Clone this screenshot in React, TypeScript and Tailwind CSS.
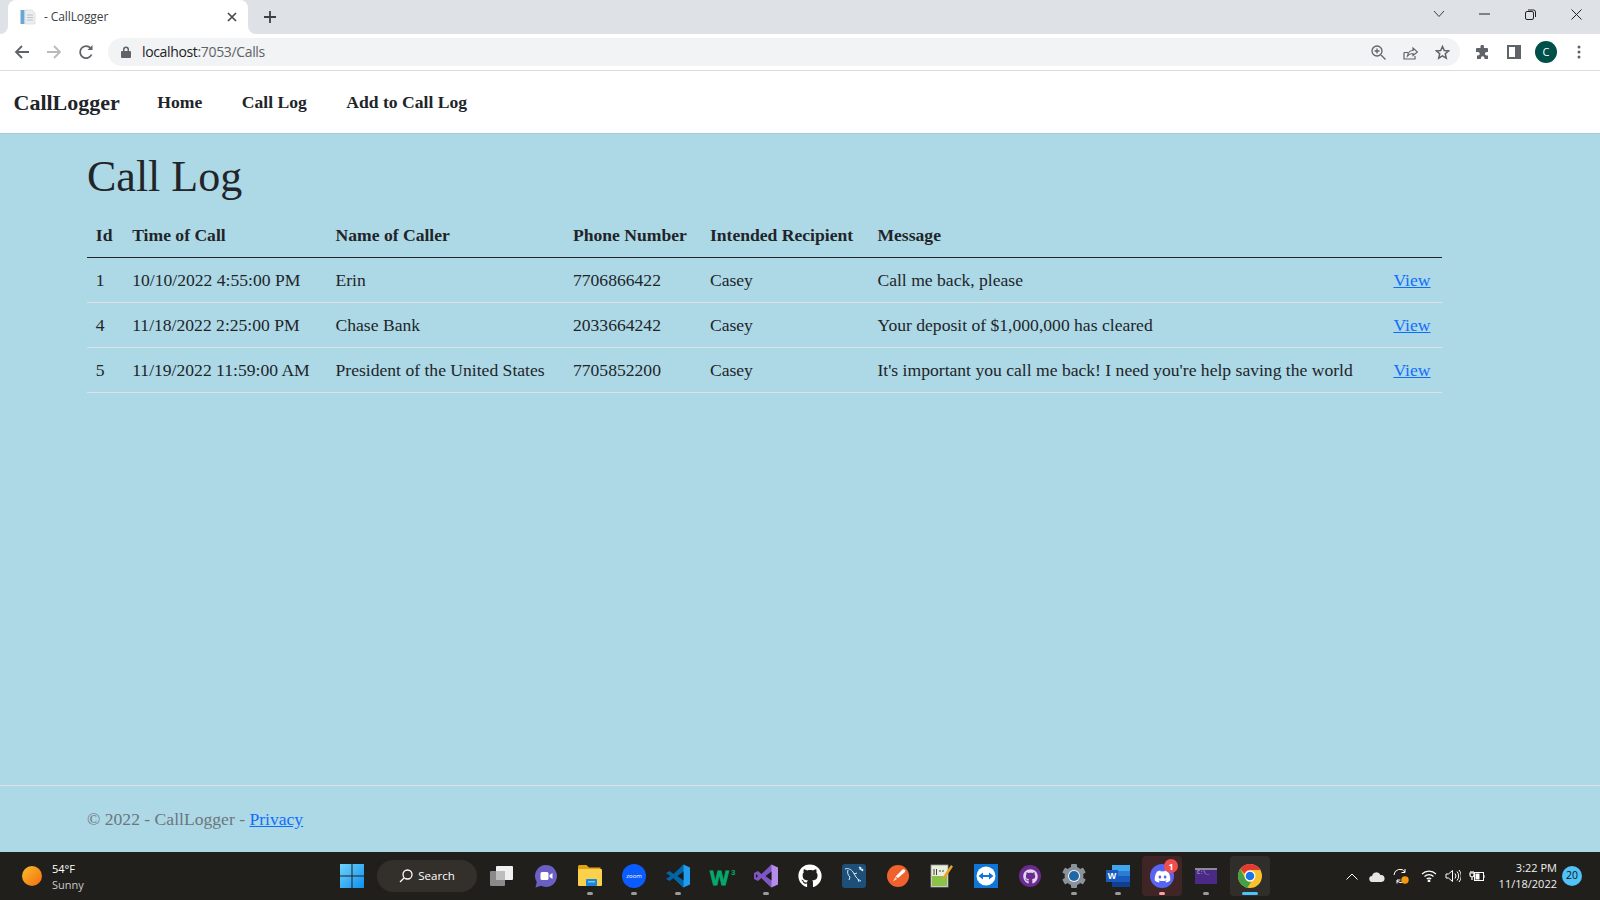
import React from "react";
import { FaGithub, FaDiscord } from "react-icons/fa";

const serif = "[font-family:'Liberation_Serif',serif]";

const rows = [
  ["1", "10/10/2022 4:55:00 PM", "Erin", "7706866422", "Casey", "Call me back, please"],
  ["4", "11/18/2022 2:25:00 PM", "Chase Bank", "2033664242", "Casey", "Your deposit of $1,000,000 has cleared"],
  ["5", "11/19/2022 11:59:00 AM", "President of the United States", "7705852200", "Casey", "It's important you call me back! I need you're help saving the world"],
];

function Favicon() {
  return (
    <svg width="16" height="16" viewBox="0 0 16 16">
      <rect x="0.5" y="1" width="4" height="14" fill="#6aa6d6" />
      <path d="M5 1h7l3 3v11H5z" fill="#eceff1" stroke="#cfd4d8" strokeWidth="0.6" />
      <path d="M7 6h6M7 8.5h6M7 11h6" stroke="#b9c2c9" strokeWidth="1" />
    </svg>
  );
}

function TabStrip() {
  return (
    <div className="h-[34px] bg-[#dee1e6] flex items-end relative shrink-0">
      <div className="ml-[8px] w-[240px] h-[34px] bg-white rounded-t-[8px] flex items-center pl-[12px] relative">
        <Favicon />
        <span className="ml-[8px] text-[12px] tracking-[-0.1px] text-[#3c4043] [font-family:'Open_Sans',sans-serif] flex-1">- CallLogger</span>
        <svg className="mr-[11px]" width="10" height="10" viewBox="0 0 10 10" stroke="#45484c" strokeWidth="1.7"><path d="M1 1l8 8M9 1l-8 8" /></svg>
        <div className="absolute left-[-8px] bottom-0 w-[8px] h-[8px] bg-white"><div className="w-full h-full bg-[#dee1e6] rounded-br-[8px]" /></div>
        <div className="absolute right-[-8px] bottom-0 w-[8px] h-[8px] bg-white"><div className="w-full h-full bg-[#dee1e6] rounded-bl-[8px]" /></div>
      </div>
      <svg className="ml-[15px] mb-[10px]" width="14" height="14" viewBox="0 0 14 14" stroke="#3c4043" strokeWidth="1.8"><path d="M7 1v12M1 7h12" /></svg>
      <div className="ml-auto self-start flex items-center h-[28px] pr-[18px]">
        <svg width="12" height="8" viewBox="0 0 12 8" fill="none" stroke="#3c4043" strokeWidth="1"><path d="M1 1l5 5.5L11 1" /></svg>
        <svg className="ml-[34px]" width="11" height="2" viewBox="0 0 11 2"><path d="M0 1h11" stroke="#222" strokeWidth="1" /></svg>
        <svg className="ml-[35px]" width="11" height="11" viewBox="0 0 11 11" fill="none" stroke="#222" strokeWidth="1"><rect x="0.5" y="2.5" width="8" height="8" rx="1.5" /><path d="M3 1h5.5A2 2 0 0 1 10.500 3v5" /></svg>
        <svg className="ml-[35px]" width="11" height="11" viewBox="0 0 11 11" stroke="#222" strokeWidth="1"><path d="M0.500 0.500l10 10M10.500 0.500l-10 10" /></svg>
      </div>
    </div>
  );
}

function Toolbar() {
  return (
    <div className="h-[37px] bg-white border-b border-[#dadce0] flex items-center shrink-0">
      <div className="w-[108px] flex items-center pl-[14px] gap-[16px]">
        <svg width="16" height="16" viewBox="0 0 16 16" fill="none" stroke="#5f6368" strokeWidth="1.800"><path d="M15 8H2M8 2L2 8l6 6" /></svg>
        <svg width="16" height="16" viewBox="0 0 16 16" fill="none" stroke="#b8babd" strokeWidth="1.800"><path d="M1 8h13M8 2l6 6-6 6" /></svg>
        <svg width="16" height="16" viewBox="0 0 16 16" fill="none" stroke="#5f6368" strokeWidth="1.800"><path d="M13.600 10.500A6 6 0 1 1 12.500 4" /><path d="M14.500 1v5h-5z" fill="#5f6368" stroke="none" /></svg>
      </div>
      <div className="w-[1352px] h-[28px] bg-[#f1f3f4] rounded-full flex items-center pl-[13px] pr-[10px]">
        <svg width="10" height="12" viewBox="0 0 10 12" fill="#5f6368"><path d="M2 5V3.500a3 3 0 0 1 6 0V5h1a1 1 0 0 1 1 1v5a1 1 0 0 1-1 1H1a1 1 0 0 1-1-1V6a1 1 0 0 1 1-1zm1.500 0h3V3.500a1.500 1.500 0 0 0-3 0z" /></svg>
        <span className="ml-[11px] pb-[2px] text-[14px] text-[#202124] [font-family:'Open_Sans',sans-serif] tracking-[-0.35px]">localhost<span className="text-[#5f6368]">:7053/Calls</span></span>
        <div className="ml-auto flex items-center gap-[17px]">
          <svg width="15" height="15" viewBox="0 0 15 15" fill="none" stroke="#5f6368" strokeWidth="1.300"><circle cx="6" cy="6" r="5" /><path d="M10 10l4.500 4.500M6 3.500v5M3.500 6h5" /></svg>
          <svg width="15" height="15" viewBox="0 0 15 15" fill="none" stroke="#5f6368" strokeWidth="1.200"><path d="M1 7.500V14h11v-3M1 7.500h4M4.500 11C5 7 8 5.500 10 5.500V3l4.500 4L10 10.500V8.500C8 8.500 6 9 4.500 11z" /></svg>
          <svg width="15" height="15" viewBox="0 0 15 15" fill="none" stroke="#5f6368" strokeWidth="1.500"><path d="M7.500 1.500l1.800 4 4.300.4-3.300 2.900 1 4.300-3.800-2.300-3.800 2.300 1-4.300L1.400 5.900l4.300-.4z" /></svg>
        </div>
      </div>
      <div className="flex items-center pl-[15px]">
        <svg width="15" height="15" viewBox="0 0 15 15" fill="#5f6368"><path d="M5.500 1.500a1.700 1.700 0 0 1 3.400 0V3H12a1 1 0 0 1 1 1v3h-1.300a1.800 1.800 0 0 0 0 3.600H13V14H9.500v-1a1.800 1.800 0 0 0-3.600 0v1H2v-3.500h1a1.800 1.800 0 0 0 0-3.600H1V4a1 1 0 0 1 1-1h3.500z" /></svg>
        <svg className="ml-[17px]" width="14" height="14" viewBox="0 0 14 14" fill="none"><rect x="1" y="1" width="12" height="12" stroke="#5f6368" strokeWidth="2" /><rect x="8" y="1" width="5" height="12" fill="#5f6368" /></svg>
        <div className="ml-[14px] w-[22px] h-[22px] rounded-full bg-[#00504a] text-white text-[11px] flex items-center justify-center [font-family:'Open_Sans',sans-serif]">C</div>
        <svg className="ml-[20px]" width="4" height="14" viewBox="0 0 4 14" fill="#5f6368"><circle cx="2" cy="2" r="1.500" /><circle cx="2" cy="7" r="1.500" /><circle cx="2" cy="12" r="1.500" /></svg>
      </div>
    </div>
  );
}

function NavBar() {
  return (
    <div className={`h-[63px] bg-white flex items-center pl-[13.500px] text-[#212529] font-bold ${serif} border-b border-[#a5cbd9] shrink-0`}>
      <span className="text-[22px]">CallLogger</span>
      <span className="ml-[37.500px] text-[17.600px]">Home</span>
      <span className="ml-[39.500px] text-[17.600px]">Call Log</span>
      <span className="ml-[39.500px] text-[17.600px]">Add to Call Log</span>
    </div>
  );
}

const ths = ["Id", "Time of Call", "Name of Caller", "Phone Number", "Intended Recipient", "Message"];
const pad = ["pl-[8.800px] pr-[9.500px]", "px-[8.800px]", "pl-[8.800px] pr-[10px]", "px-[8.800px]", "px-[8.800px]", "px-[8.800px]"];

function CallTable() {
  return (
    <table className="w-[1355px] border-collapse text-[17.600px] leading-[26.400px] text-[#212529]">
      <thead>
        <tr className="border-b border-[#212529] h-[45px] text-left">
          {ths.map((t, i) => (
            <th key={t} className={`${pad[i]} pt-[1px] font-bold`}>{t}</th>
          ))}
          <th className="pl-[8.800px] pr-[11.500px]"></th>
        </tr>
      </thead>
      <tbody>
        {rows.map((r) => (
          <tr key={r[0]} className="border-b border-[#dee2e6] h-[45px]">
            {r.map((c, i) => (
              <td key={i} className={`${pad[i]} pt-[1px]`}>{c}</td>
            ))}
            <td className="pl-[8.800px] pr-[11.500px] pt-[1px] text-right"><span className="text-[#0d6efd] underline">View</span></td>
          </tr>
        ))}
      </tbody>
    </table>
  );
}

function Dot({ color = "#9b9b9b", w = 6 }: { color?: string; w?: number }) {
  return <div className="absolute bottom-[1px] left-1/2 -translate-x-1/2 h-[3px] rounded-full" style={{ background: color, width: w }} />;
}

function Item({ children, dot, bg, dotW }: { children: React.ReactNode; dot?: string; bg?: string; dotW?: number }) {
  return (
    <div className="relative w-[44px] h-[40px] flex items-center justify-center shrink-0">
      {bg && <div className={`absolute inset-y-0 left-[2px] right-[2px] rounded-[4px] ${bg}`} />}
      <div className="relative">{children}</div>
      {dot && <Dot color={dot} w={dotW} />}
    </div>
  );
}

const I = {
  Win: () => (
    <svg width="24" height="24" viewBox="0 0 24 24">
      <defs>
        <linearGradient id="wg" x1="0" y1="0" x2="1" y2="1"><stop offset="0" stopColor="#6fd3fb" /><stop offset="1" stopColor="#0f8fee" /></linearGradient>
      </defs>
      <path d="M0 0h11.500v11.500H0zM12.500 0H24v11.500H12.500zM0 12.500h11.500V24H0zM12.500 12.500H24V24H12.500z" fill="url(#wg)" />
    </svg>
  ),
  Task: () => (
    <svg width="24" height="22" viewBox="0 0 24 22">
      <rect x="6" y="1" width="17" height="14" rx="1" fill="#f0f0f0" />
      <rect x="0" y="6" width="15" height="15" rx="1" fill="#8a8a8a" />
      <rect x="6" y="6" width="9" height="9" fill="#bdbdbd" />
    </svg>
  ),
  Teams: () => (
    <svg width="24" height="24" viewBox="0 0 24 24">
      <path d="M12 1a11 11 0 1 1-5 20.800L1.500 23.500 2.800 18A11 11 0 0 1 12 1z" fill="#6b5fc4" />
      <rect x="6.500" y="8" width="8" height="8" rx="1.500" fill="#fff" />
      <path d="M15.500 11l3-2v6l-3-2z" fill="#fff" />
    </svg>
  ),
  Folder: () => (
    <svg width="24" height="22" viewBox="0 0 24 22">
      <path d="M0 1.500A1.500 1.500 0 0 1 1.500 0h7L11 2.500h11.500V6H0z" fill="#e0a410" />
      <rect x="0" y="4" width="24" height="17" rx="1" fill="#fbd04c" />
      <rect x="8" y="14" width="11" height="7" rx="1" fill="#1a86d8" />
      <rect x="10" y="16" width="7" height="1.500" fill="#7cc4f0" />
    </svg>
  ),
  Zoom: () => (
    <div className="w-[24px] h-[24px] rounded-full bg-[#0b5cff] text-white text-[6px] flex items-center justify-center [font-family:'Open_Sans',sans-serif]">zoom</div>
  ),
  VSCode: () => (
    <svg width="24" height="24" viewBox="0 0 24 24">
      <path d="M17.500 0.500L24 3.500v17l-6.500 3L7 13.500l10.500-13z" fill="#1f9cf0" />
      <path d="M17.500 0.500v23L7.500 14l-4 3L0 15l4.500-3L0 9l3.500-2 4 3z" fill="#0065a9" />
      <path d="M17.500 7.500L11.500 12l6 4.500z" fill="#1c1a17" />
    </svg>
  ),
  W3: () => (
    <div className="relative w-[26px] h-[20px] [font-family:'Liberation_Sans',sans-serif] font-bold text-[#04aa6d] leading-none">
      <span className="absolute left-[1px] top-[2px] text-[20px] [-webkit-text-stroke:0.8px_#04aa6d]">W</span>
      <span className="absolute left-[22px] top-[3px] text-[8px]">3</span>
    </div>
  ),
  VS: () => (
    <svg width="24" height="24" viewBox="0 0 24 24">
      <path d="M17.500 0.500L24 3.500v17l-6.500 3L7 13.500z" fill="#b48cea" />
      <path d="M17.500 0.500v23L7.500 14l-3.500 3L0 15V9l4 -2 3.500 3z" fill="#7f55c4" />
      <path d="M17.500 7.500L11.500 12l6 4.500z" fill="#1c1a17" />
      <path d="M2 10v4l2-2z" fill="#1c1a17" />
    </svg>
  ),
  MySql: () => (
    <svg width="24" height="24" viewBox="0 0 24 24">
      <rect width="24" height="24" rx="3" fill="#1d4f78" />
      <path d="M3 5c3-1 6 0 8 3l3 5c1.500 2 3 3 5 4M6 6c-1 3 0 5 2 7M8 13l-1 3M12 10l3-1M16 15l1 3" fill="none" stroke="#dfe8ef" strokeWidth="1" />
      <path d="M17 3l4 4M19 3l-1 2 2 1 1-1" fill="none" stroke="#dfe8ef" strokeWidth="1.300" />
    </svg>
  ),
  Postman: () => (
    <svg width="22" height="22" viewBox="0 0 22 22">
      <circle cx="11" cy="11" r="11" fill="#f0622d" />
      <path d="M15.500 4.500a1.800 1.800 0 0 1 2.500 2.500L11 13l-2.500-1.500z" fill="#fff" />
      <path d="M8.500 12L6 16.500 10 14z" fill="#ffd9c7" />
    </svg>
  ),
  Note: () => (
    <svg width="24" height="24" viewBox="0 0 24 24">
      <rect x="1" y="1" width="17" height="22" fill="#e8efdb" stroke="#999" strokeWidth="0.800" />
      <rect x="2" y="12" width="15" height="10" fill="#8bc34a" />
      <path d="M4 5v6M6.500 5v6M9 7h2M12 7h2" stroke="#444" strokeWidth="1" />
      <path d="M21 1l2 1.500-8 12-2.500 1.500.3-3z" fill="#e5a52a" />
    </svg>
  ),
  TV: () => (
    <div className="w-[24px] h-[24px] bg-[#0e76d8] flex items-center justify-center">
      <svg width="20" height="20" viewBox="0 0 20 20">
        <circle cx="10" cy="10" r="9.500" fill="#fff" />
        <path d="M2.500 10L7 6.500V9h6V6.500l4.500 3.500-4.500 3.500V11H7v2.500z" fill="#0e76d8" />
      </svg>
    </div>
  ),
  GHD: () => (
    <div className="w-[22px] h-[22px] rounded-full bg-[#6a2c91] flex items-center justify-center">
      <FaGithub size={15} color="#e3d6ec" />
    </div>
  ),
  Gear: () => (
    <svg width="24" height="24" viewBox="0 0 24 24">
      <g fill="#8a929a">
        <circle cx="12" cy="12" r="9.500" />
        {[0, 60, 120, 180, 240, 300].map((a) => (
          <rect key={a} x="9" y="0" width="6" height="5" rx="1" transform={`rotate(${a} 12 12)`} />
        ))}
      </g>
      <circle cx="12" cy="12" r="6" fill="#f1f4f6" />
      <circle cx="12" cy="12" r="5" fill="#1f67a8" />
    </svg>
  ),
  Word: () => (
    <div className="relative w-[24px] h-[22px]">
      <div className="absolute right-0 top-0 w-[18px] h-[22px] flex flex-col">
        <div className="h-1/4 bg-[#41a5ee]" />
        <div className="h-1/4 bg-[#2b7cd3]" />
        <div className="h-1/4 bg-[#185abd]" />
        <div className="h-1/4 bg-[#103f91]" />
      </div>
      <div className="absolute left-0 top-[5px] w-[12px] h-[12px] bg-[#185abd] text-white text-[9px] font-bold flex items-center justify-center leading-none [font-family:'Liberation_Sans',sans-serif]">W</div>
    </div>
  ),
  Discord: () => (
    <div className="relative w-[24px] h-[24px] rounded-full bg-[#5865f2] flex items-center justify-center">
      <FaDiscord size={17} color="#fff" />
      <div className="absolute right-[-4px] top-[-5px] w-[14px] h-[14px] rounded-full bg-[#f04d4d] text-white text-[9px] font-bold flex items-center justify-center leading-none [font-family:'Open_Sans',sans-serif]">1</div>
    </div>
  ),
  Term: () => (
    <div className="w-[22px] h-[16px] bg-[#4b2a86] border-t-[2px] border-[#8a8a9a] text-[5px] leading-[6px] text-[#d5d5e5] pl-[2px] [font-family:'Liberation_Mono',monospace]">C:\_</div>
  ),
  Chrome: () => (
    <svg width="24" height="24" viewBox="0 0 24 24">
      <circle cx="12" cy="12" r="12" fill="#fbc02d" />
      <path d="M12 0a12 12 0 0 1 10.400 6H12a6 6 0 0 0-5.600 3.800L2.300 5A12 12 0 0 1 12 0z" fill="#e53935" />
      <path d="M2.300 5l4.700 8.800A6 6 0 0 0 13 18l-3.600 5.700A12 12 0 0 1 2.300 5z" fill="#43a047" />
      <circle cx="12" cy="12" r="5.500" fill="#fff" />
      <circle cx="12" cy="12" r="4.300" fill="#1a73e8" />
    </svg>
  ),
};

function Taskbar() {
  return (
    <div className="h-[48px] bg-[#211f1b] flex items-center text-white shrink-0 [font-family:'Open_Sans',sans-serif]">
      <div className="w-[330px] flex items-center pl-[22px] shrink-0">
        <div className="w-[20px] h-[20px] rounded-full bg-gradient-to-br from-[#f6bd2c] to-[#f46a0c]" />
        <div className="ml-[10px] pt-[1px] text-[11px] leading-[16px]">
          <div>54°F</div>
          <div className="text-[#c9c9c9]">Sunny</div>
        </div>
      </div>
      <Item><I.Win /></Item>
      <div className="w-[100px] h-[32px] ml-[3px] bg-[#33302b] rounded-full flex items-center justify-center text-[11.500px] shrink-0">
        <svg className="mr-[5px]" width="14" height="14" viewBox="0 0 14 14" fill="none" stroke="#fff" strokeWidth="1.300"><circle cx="8.500" cy="5.500" r="4.500" /><path d="M5 9l-4 4" /></svg>
        Search
      </div>
      <div className="w-[3px] shrink-0" />
      <Item><I.Task /></Item>
      <Item><I.Teams /></Item>
      <Item dot="#9b9b9b"><I.Folder /></Item>
      <Item dot="#9b9b9b"><I.Zoom /></Item>
      <Item dot="#9b9b9b"><I.VSCode /></Item>
      <Item><I.W3 /></Item>
      <Item dot="#9b9b9b"><I.VS /></Item>
      <Item><FaGithub size={24} color="#fff" /></Item>
      <Item><I.MySql /></Item>
      <Item><I.Postman /></Item>
      <Item><I.Note /></Item>
      <Item><I.TV /></Item>
      <Item><I.GHD /></Item>
      <Item dot="#9b9b9b"><I.Gear /></Item>
      <Item dot="#9b9b9b"><I.Word /></Item>
      <Item dot="#f7a0a8" bg="bg-[#402526]"><I.Discord /></Item>
      <Item dot="#9b9b9b"><I.Term /></Item>
      <Item dot="#4fc3f7" dotW={16} bg="bg-[#302e2b]"><I.Chrome /></Item>
      <div className="ml-auto flex items-center pr-[18px]">
        <svg width="12" height="7" viewBox="0 0 12 7" fill="none" stroke="#fff" strokeWidth="1"><path d="M0.500 6.500L6 1l5.500 5.500" /></svg>
        <svg className="ml-[11px]" width="16" height="11" viewBox="0 0 16 11" fill="#e5e5e5"><path d="M3.500 11a3 3 0 0 1-.5-6A4.500 4.500 0 0 1 11.500 4 3.500 3.500 0 0 1 12.500 11z" /></svg>
        <svg className="ml-[8px]" width="16" height="16" viewBox="0 0 16 16" fill="none" stroke="#fff" strokeWidth="1"><path d="M1 7a6 6 0 0 1 11-3M12 1v3.500H8.500M14 9a6 6 0 0 1-10 4M4 15.500V12h3.500" /><circle cx="12" cy="12" r="3.700" fill="#f59a0d" stroke="none" /></svg>
        <svg className="ml-[12px]" width="16" height="12" viewBox="0 0 16 12" fill="none" stroke="#fff" strokeWidth="1.200"><path d="M1 4a10 10 0 0 1 14 0M3.500 6.500a6.500 6.500 0 0 1 9 0M5.800 9a3 3 0 0 1 4.400 0" /><circle cx="8" cy="11" r="0.800" fill="#fff" /></svg>
        <svg className="ml-[8px]" width="16" height="14" viewBox="0 0 16 14" fill="none" stroke="#fff" strokeWidth="1"><path d="M1 5v4h2.500L7.500 12.500V1.500L3.500 5z" /><path d="M10 4.500a4 4 0 0 1 0 5M12 2.500a7 7 0 0 1 0 9M14 1a9 9 0 0 1 0 12" /></svg>
        <svg className="ml-[8px]" width="16" height="12" viewBox="0 0 16 12" fill="none" stroke="#fff" strokeWidth="1"><rect x="5.500" y="2.500" width="9" height="8" /><rect x="6.500" y="3.500" width="4" height="6" fill="#fff" stroke="none" /><path d="M15 5v3" /><path d="M2 1v2M4 1v2M1 3h4v2a2 2 0 0 1-4 0zM3 7v3" strokeWidth="1.200" /></svg>
        <div className="ml-[12px] w-[60px] text-right text-[11px] leading-[16px] text-[#f0f0f0]">
          <div>3:22 PM</div>
          <div>11/18/2022</div>
        </div>
        <div className="ml-[5px] w-[20px] h-[20px] rounded-full bg-[#4fc3f7] text-[#111] text-[10.500px] flex items-center justify-center">20</div>
      </div>
    </div>
  );
}

export default function App() {
  return (
    <div className="w-[1600px] h-[900px] overflow-hidden flex flex-col">
      <TabStrip />
      <Toolbar />
      <NavBar />
      <div className={`flex-1 flex flex-col bg-[#add8e6] ${serif}`}>
        <main className="flex-1 pl-[87px] pt-[16px]">
          <h1 className="text-[44px] leading-[53px] mb-[9px] text-[#212529]">Call Log</h1>
          <CallTable />
        </main>
        <footer className="h-[67px] border-t border-[#dee2e6] pl-[87px] flex items-center text-[17.600px] text-[#6c757d]">
          <span>© 2022 - CallLogger - <span className="text-[#0d6efd] underline">Privacy</span></span>
        </footer>
      </div>
      <Taskbar />
    </div>
  );
}
